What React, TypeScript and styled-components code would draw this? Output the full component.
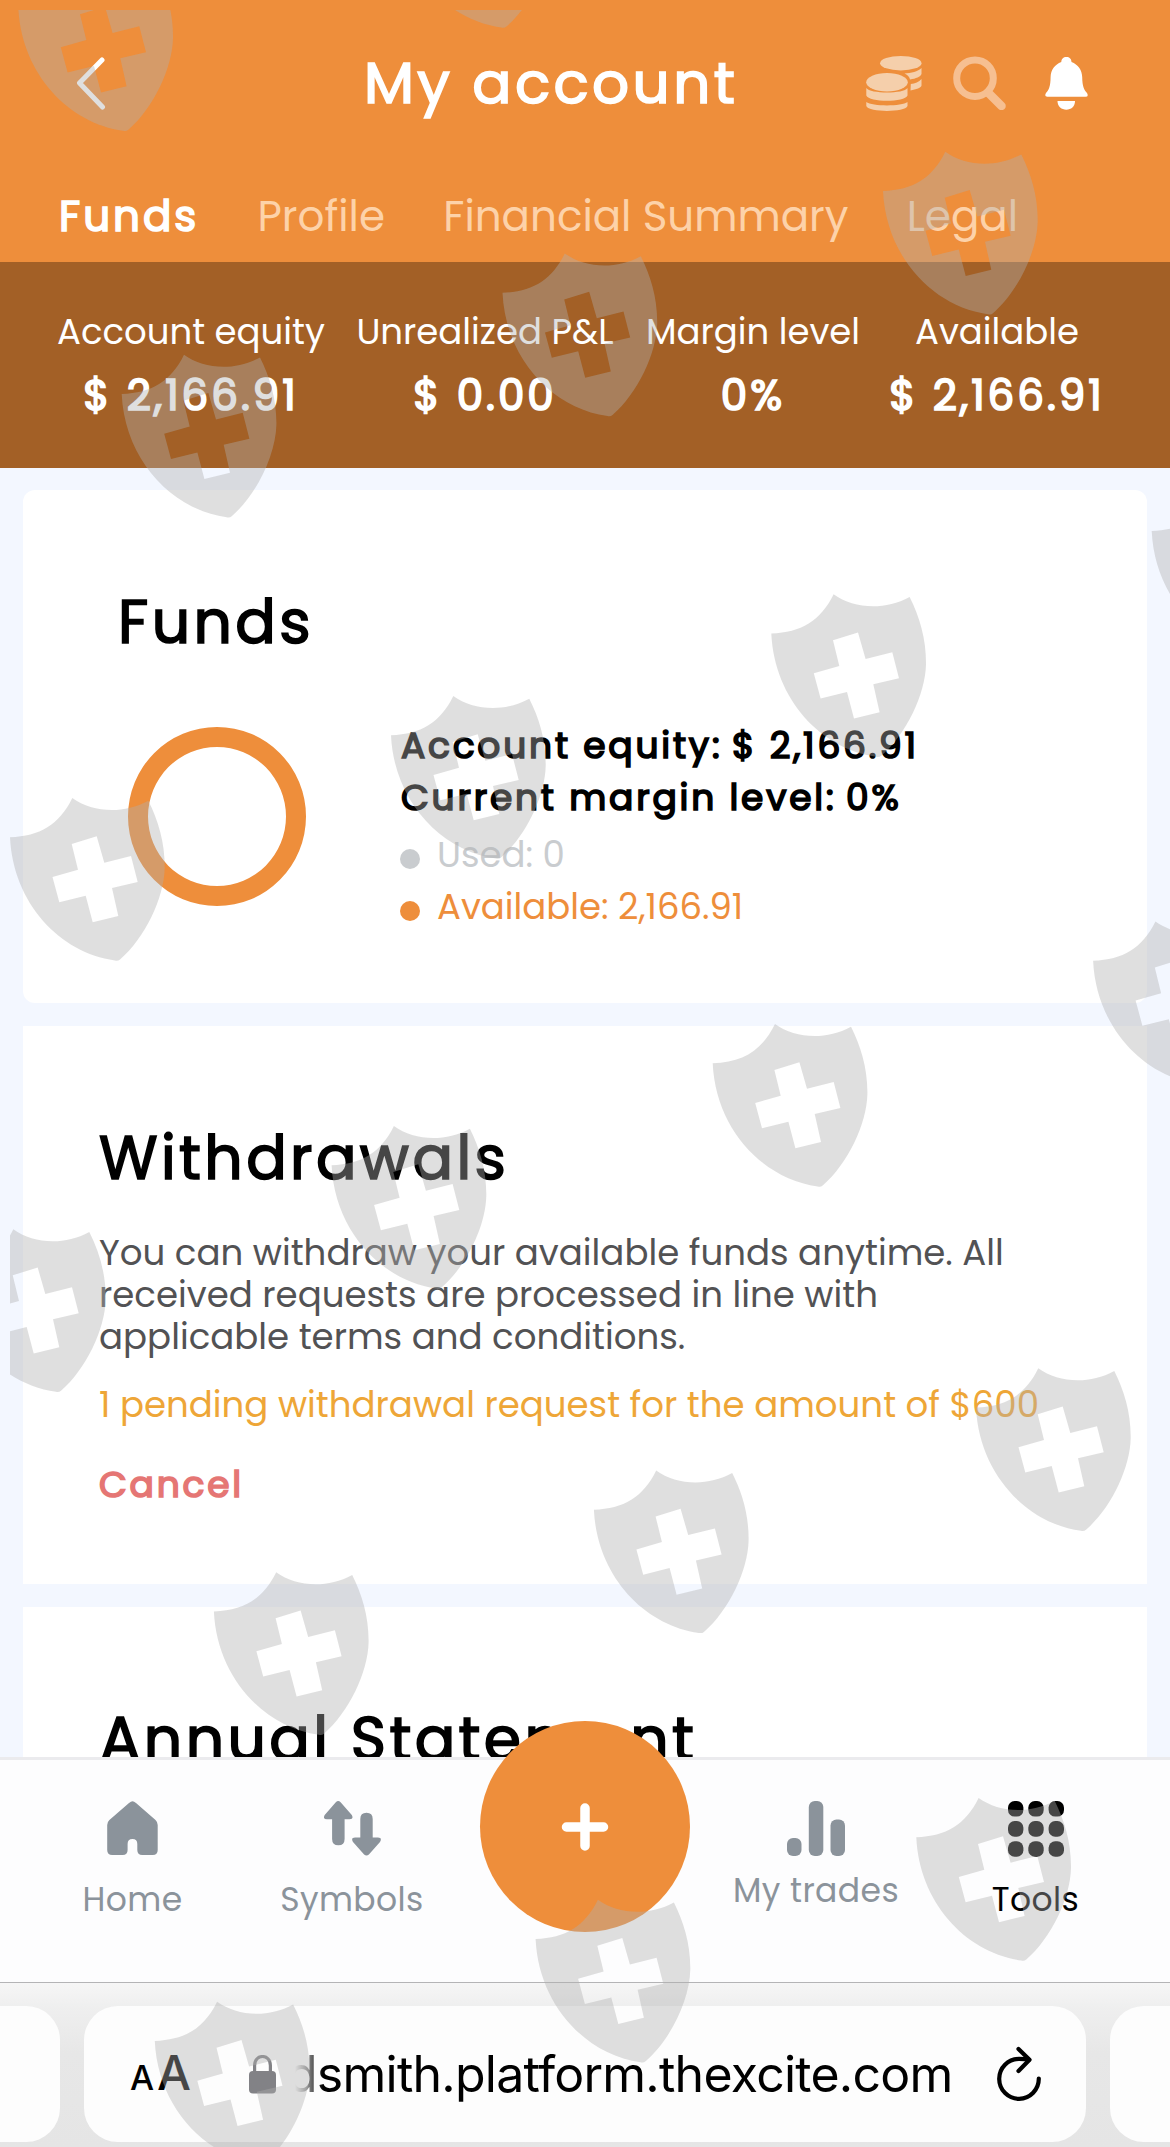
import React from 'react';
import styled, { createGlobalStyle, css } from 'styled-components';

const Colors = {
    orange: '#ee8e3b',
    brown: '#a36026',
    paleBlue: '#f3f7ff',
    white: '#ffffff',
    black: '#000000',
    darkGrey: '#525254',
    grey: '#8b939b',
    paleGrey: '#c9cccf',
    amber: '#eea637',
    red: '#e57674',
};

const GlobalStyle = createGlobalStyle`
    body {
        margin: 0px;
        background-color: ${Colors.white};
    }

    * {
        box-sizing: border-box;
    }
`;

// bold text is the regular cut, thickened and spaced out
const heavy = css`
    font-weight: 400;
    letter-spacing: 3px;
    -webkit-text-stroke: 1.7px currentColor;
`;

const Page = styled.div`
    position: relative;
    width: 1170px;
    height: 2147px;
    overflow: hidden;
    display: flex;
    flex-direction: column;
    font-family: 'Poppins', 'Inter', 'Liberation Sans', sans-serif;
    white-space: nowrap;
`;

const Header = styled.header`
    flex: none;
    height: 262px;
    background-color: ${Colors.orange};
    color: ${Colors.white};
`;

const TopBar = styled.div`
    display: flex;
    align-items: center;
    height: 166px;
    padding: 0px 82px 0px 76px;
`;

const Title = styled.h1`
    ${heavy}
    margin: 0px 0px 0px 258px;
    font-size: 58px;
    line-height: 80px;
    letter-spacing: 3.4px;
`;

const HeaderIcons = styled.div`
    display: flex;
    align-items: center;
    margin-left: auto;
    gap: 31px;

    svg:last-child {
        margin-left: 8px;
    }
`;

const Tabs = styled.nav`
    display: flex;
    gap: 58.3px;
    padding-left: 59px;
    line-height: 101px;
`;

const Tab = styled.a<{ active?: boolean }>`
    ${props => props.active && heavy}
    font-size: 42px;
    color: ${props => props.active ? Colors.white : '#fdd2a9'};
`;

const Stats = styled.section`
    flex: none;
    display: grid;
    grid-template-columns: 268px 264px 216px 216px;
    column-gap: 28px;
    height: 206px;
    padding: 42px 0px 0px 57px;
    background-color: ${Colors.brown};
    color: ${Colors.white};
    text-align: center;
`;

const StatLabel = styled.div`
    font-size: 35.5px;
    line-height: 56px;
`;

const StatValue = styled.div`
    ${heavy}
    font-size: 42px;
    line-height: 71px;
`;

const Content = styled.main`
    flex: none;
    display: flex;
    flex-direction: column;
    gap: 23px;
    height: 1289px;
    padding: 22px 23px 0px;
    overflow: hidden;
    background-color: ${Colors.paleBlue};
`;

const Card = styled.section<{ height: number, indent: number, rounded?: boolean }>`
    flex: none;
    height: ${props => props.height}px;
    padding: 92px 0px 0px ${props => props.indent}px;
    border-radius: ${props => props.rounded ? '12px' : '0px'};
    background-color: ${Colors.white};
`;

const CardTitle = styled.h2`
    ${heavy}
    margin: 0px;
    font-size: 60px;
    line-height: 80px;
    letter-spacing: 3.4px;
    color: ${Colors.black};
`;

const FundsRow = styled.div`
    display: flex;
    padding: 57px 0px 0px 10px;
`;

const Ring = styled.div`
    width: 178px;
    height: 179px;
    margin-top: 8px;
    border: 20px solid ${Colors.orange};
    border-radius: 50%;
`;

const Details = styled.div`
    margin-left: 95px;
    padding-top: 1px;
`;

const DetailText = styled.div`
    font-size: 36px;
    line-height: 52px;
    -webkit-text-stroke: 1.7px currentColor;
`;

const Spaced = styled.span`
    letter-spacing: 2.8px;
`;

const Legend = styled.div`
    padding-top: 5px;
`;

const LegendItem = styled.div<{ color: string }>`
    display: flex;
    align-items: center;
    font-size: 35.5px;
    line-height: 52px;
    color: ${props => props.color};

    &::before {
        content: '';
        width: 20px;
        height: 20px;
        margin: 7px 17px 0px -1px;
        border-radius: 50%;
        background-color: currentColor;
    }
`;

const Paragraph = styled.p`
    display: flex;
    flex-direction: column;
    margin: 34px 0px 0px;
    font-size: 35.6px;
    line-height: 42px;
    color: ${Colors.darkGrey};
`;

const Pending = styled.p`
    margin: 24px 0px 0px;
    font-size: 35.6px;
    line-height: 46px;
    color: ${Colors.amber};
`;

const Cancel = styled.a`
    ${heavy}
    display: block;
    margin-top: 36px;
    font-size: 36px;
    line-height: 42px;
    letter-spacing: 2.8px;
    color: ${Colors.red};
`;

const BottomNav = styled.nav`
    flex: none;
    display: grid;
    grid-template-columns: 265px 174px 292px 170px 269px;
    height: 225px;
    border-top: 3px solid #ebebee;
    background-color: #fdfdfe;
`;

const NavItem = styled.a<{ active?: boolean, gap?: number }>`
    display: flex;
    flex-direction: column;
    align-items: center;
    gap: ${props => props.gap || 24}px;
    padding-top: 41px;
    font-size: 33px;
    line-height: 40px;
    letter-spacing: 0.4px;
    color: ${props => props.active ? Colors.black : Colors.grey};
`;

const AddButton = styled.button`
    display: flex;
    align-items: center;
    justify-content: center;
    width: 210px;
    height: 211px;
    margin: -39px auto 0px;
    padding: 0px;
    border: 0px;
    border-radius: 50%;
    background-color: ${Colors.orange};
`;

const BrowserBar = styled.footer`
    flex: none;
    display: flex;
    align-items: flex-start;
    gap: 24px;
    height: 165px;
    padding-top: 23px;
    border-top: 1px solid #b4b4b6;
    background: linear-gradient(#f6f6f6 0px, #efefef 24px, #e7e7e7 70px, #e5e5e5 100%);
`;

const SideTab = styled.div<{ right?: boolean }>`
    flex: none;
    width: 60px;
    height: 136px;
    border-radius: ${props => props.right ? '34px 0px 0px 34px' : '0px 34px 34px 0px'};
    background-color: #fdfdfd;
`;

const AddressBar = styled.div`
    flex: none;
    display: flex;
    align-items: center;
    width: 1002px;
    height: 136px;
    padding: 0px 43px 0px 46px;
    border-radius: 34px;
    background-color: #fdfdfd;
    color: ${Colors.black};
`;

const TextSize = styled.div`
    display: flex;
    align-items: baseline;
    gap: 3px;
    width: 119px;
    padding-top: 3px;
    font-family: 'Inter', sans-serif;
    font-weight: 500;
    line-height: 60px;
`;

const Letter = styled.span<{ size: number }>`
    font-size: ${props => props.size}px;
`;

const Url = styled.div`
    flex: 1;
    margin-left: 11px;
    font-family: 'Inter', sans-serif;
    font-size: 50px;
    letter-spacing: -0.75px;
    mask-image: linear-gradient(to right, transparent 8px, #000 36px);
`;

const Watermark = styled.svg`
    position: absolute;
    top: 0px;
    left: 0px;
    pointer-events: none;
    clip-path: inset(10px 0px 0px 10px);
`;

const shields = [
    [18.3, -31.7], [396.4, -135], [883, 151.7], [502.5, 253.5], [121.7, 354.7],
    [1151.7, 491.7], [771.3, 594.3], [391, 696], [10, 798],
    [1093.1, 921.5], [712.7, 1024], [331.6, 1126], [-49, 1229.3],
    [976, 1368.3], [593.9, 1470.4], [213.9, 1572.3],
    [916.3, 1798], [535.6, 1899.7], [154.8, 2001.7],
];

const tabs = ['Funds', 'Profile', 'Financial Summary', 'Legal'];

const stats = [
    { label: 'Account equity', value: '$ 2,166.91' },
    { label: 'Unrealized P&L', value: '$ 0.00' },
    { label: 'Margin level', value: '0%' },
    { label: 'Available', value: '$ 2,166.91' },
];

const BackIcon = () => (
    <svg width="30" height="54" viewBox="0 0 30 54" fill="none" stroke="#fff" strokeWidth="5" strokeLinecap="round" strokeLinejoin="round">
        <path d="M26 4 L3.5 27 L26.5 51" />
    </svg>
);

const CoinsIcon = () => (
    <svg width="56" height="55" viewBox="0 0 56 55" fill="#f5cfab">
        <ellipse cx="34.8" cy="7.2" rx="20.7" ry="7.2" />
        <path d="M55.5 12 C52 15.5 45 17 38.5 17.5 C42 19 43.5 21 44 23.5 C50 22.5 54.5 21 55.5 18 Z" />
        <path d="M55.5 23 C53 26 49 27.5 44.8 28 L44.5 34.5 C50 33.5 55.5 31.5 55.5 29.5 Z" />
        <ellipse cx="21" cy="26.2" rx="20.8" ry="9.2" />
        <path d="M0.3 32 C4 38 38 38 41.5 32 V39.5 C39 46.5 3 46.5 0.3 39.5 Z" />
        <path d="M0.3 46 C6 50.5 36 50.5 41.5 46 V50 C39 56.5 3 56.5 0.3 50 Z" />
    </svg>
);

const SearchIcon = () => (
    <svg width="53" height="54" viewBox="0 0 53 54" fill="none" stroke="#f6bf91">
        <circle cx="22" cy="22.2" r="18.3" strokeWidth="7" />
        <path d="M36 37.5 L48.5 50" strokeWidth="8.5" strokeLinecap="round" />
    </svg>
);

const BellIcon = () => (
    <svg width="43" height="53" viewBox="0 0 43 53" fill="#fff">
        <path d="M21.4 0 C24.5 0 26.5 2 26.5 5 C33 7.5 37 13 37.2 20 C37.3 29 39 33 42 36 Q44 39.7 40.5 39.7 H2.3 Q-1 39.7 1 36 C4 33 5.5 29 5.6 20 C5.8 13 9.8 7.5 16.3 5 C16.3 2 18.3 0 21.4 0 Z" />
        <path d="M12.5 44 H30 C30 49.5 26 52.7 21.3 52.7 S12.5 49.5 12.5 44 Z" />
    </svg>
);

const HomeIcon = () => (
    <svg width="51" height="55" viewBox="0 0 51 55" fill="currentColor">
        <path d="M25.5 0.3 Q27 0.3 29 2 L48.5 19 Q50.7 21 50.7 24 V49 Q50.7 54 45.7 54 H35.3 Q30.3 54 30.3 49 V43 Q30.3 38 25.5 38 Q20.6 38 20.6 43 V49 Q20.6 54 15.6 54 H5.2 Q0.2 54 0.2 49 V24 Q0.2 21 2.4 19 L22 2 Q24 0.3 25.5 0.3 Z" />
    </svg>
);

const SymbolsIcon = () => (
    <svg width="57" height="55" viewBox="0 0 57 55" fill="currentColor">
        <path d="M11.8 1.2 Q14.2 -1 16.6 1.2 L27.8 14 Q30 18.3 25.5 18.3 H20.6 V38 Q20.6 44.3 14.4 44.3 Q8.1 44.3 8.1 38 V18.3 H3 Q-1.5 18.3 0.7 14 Z" />
        <path d="M40.1 53.5 Q42.5 55.7 44.9 53.5 L56 41 Q58.4 36.5 54 36.5 H48.7 V18 Q48.7 11.8 42.5 11.8 Q36.3 11.8 36.3 18 V36.5 H31 Q26.6 36.5 29 41 Z" />
    </svg>
);

const TradesIcon = () => (
    <svg width="58" height="55" viewBox="0 0 58 55" fill="currentColor">
        <rect x="0" y="37" width="14.5" height="18" rx="6" />
        <rect x="21.8" y="0" width="14.5" height="55" rx="6" />
        <rect x="43.5" y="18.5" width="14.5" height="36.5" rx="6" />
    </svg>
);

const ToolsIcon = () => (
    <svg width="56" height="56" viewBox="0 0 56 56" fill="currentColor">
        {[0, 1, 2].map(row => [0, 1, 2].map(col => (
            <rect key={`${row}${col}`} x={col * 20.3} y={row * 20.1} width="15.4" height="15.6" rx="6.6" />
        )))}
    </svg>
);

const PlusIcon = () => (
    <svg width="48" height="48" viewBox="0 0 48 48" stroke="#fff" strokeWidth="9.5" strokeLinecap="round">
        <path d="M24 5 V43 M5.5 24 H42.5" />
    </svg>
);

const LockIcon = () => (
    <svg width="27" height="39" viewBox="0 0 27 39">
        <path d="M5.6 18 V10.5 C5.6 -1.5 21.4 -1.5 21.4 10.5 V18" fill="none" stroke="#828286" strokeWidth="3.2" />
        <rect x="0" y="16" width="27" height="22.5" rx="4" fill="#828286" />
    </svg>
);

const ReloadIcon = () => (
    <svg width="48" height="56" viewBox="0 0 48 56" fill="none" stroke="#000" strokeWidth="4.2" strokeLinecap="round" strokeLinejoin="round">
        <path d="M43.8 32.5 A19.8 20 0 1 1 24 12.8 Q30 12.8 34 13.8" />
        <path d="M23.5 3 L34.5 13.8 L23.5 25" />
    </svg>
);

const App = () => (
    <Page>
        <GlobalStyle />
        <Header>
            <TopBar>
                <BackIcon />
                <Title>My account</Title>
                <HeaderIcons>
                    <CoinsIcon />
                    <SearchIcon />
                    <BellIcon />
                </HeaderIcons>
            </TopBar>
            <Tabs>
                {tabs.map(tab => (
                    <Tab key={tab} active={tab === 'Funds'}>{tab}</Tab>
                ))}
            </Tabs>
        </Header>
        <Stats>
            {stats.map(stat => (
                <div key={stat.label}>
                    <StatLabel>{stat.label}</StatLabel>
                    <StatValue>{stat.value}</StatValue>
                </div>
            ))}
        </Stats>
        <Content>
            <Card height={513} indent={95} rounded>
                <CardTitle>Funds</CardTitle>
                <FundsRow>
                    <Ring />
                    <Details>
                        <DetailText><Spaced>Account equity:</Spaced> <Spaced>$ 2,166.91</Spaced></DetailText>
                        <DetailText><Spaced>Current margin level:</Spaced> <Spaced>0%</Spaced></DetailText>
                        <Legend>
                            <LegendItem color={Colors.paleGrey}>Used: 0</LegendItem>
                            <LegendItem color={Colors.orange}>Available: 2,166.91</LegendItem>
                        </Legend>
                    </Details>
                </FundsRow>
            </Card>
            <Card height={558} indent={76}>
                <CardTitle>Withdrawals</CardTitle>
                <Paragraph>
                    <span>You can withdraw your available funds anytime. All</span>
                    <span>received requests are processed in line with</span>
                    <span>applicable terms and conditions.</span>
                </Paragraph>
                <Pending>1 pending withdrawal request for the amount of $600</Pending>
                <Cancel>Cancel</Cancel>
            </Card>
            <Card height={558} indent={77}>
                <CardTitle>Annual Statement</CardTitle>
            </Card>
        </Content>
        <BottomNav>
            <NavItem>
                <HomeIcon />
                <span>Home</span>
            </NavItem>
            <NavItem>
                <SymbolsIcon />
                <span>Symbols</span>
            </NavItem>
            <AddButton><PlusIcon /></AddButton>
            <NavItem gap={15}>
                <TradesIcon />
                <span>My trades</span>
            </NavItem>
            <NavItem active gap={23}>
                <ToolsIcon />
                <span>Tools</span>
            </NavItem>
        </BottomNav>
        <BrowserBar>
            <SideTab />
            <AddressBar>
                <TextSize>
                    <Letter size={34}>A</Letter>
                    <Letter size={48}>A</Letter>
                </TextSize>
                <LockIcon />
                <Url>dsmith.platform.thexcite.com</Url>
                <ReloadIcon />
            </AddressBar>
            <SideTab right />
        </BrowserBar>
        <Watermark width="1170" height="2147" fill="rgba(175, 175, 175, 0.4)" fillRule="evenodd">
            {shields.map(([x, y]) => (
                <path
                    key={`${x},${y}`}
                    transform={`translate(${x} ${y})`}
                    d="M0 39.3 C30 38 49 27 62.3 0 C82 14 112 17 138.3 2.7 C148 22 155 44 154.7 70 C154 100 135 140 110 161.5 Q108 163.2 105 162.5 C50 155 3 105 0 39.3 Z M61.7 46 L86.7 38.3 L94.3 64.7 L121 58 L127.7 84 L102 90 L108.3 118 L82.7 124.3 L75.7 97.7 L49.3 104.3 L42.5 79 L68 71.7 Z"
                />
            ))}
        </Watermark>
    </Page>
);

export default App;
